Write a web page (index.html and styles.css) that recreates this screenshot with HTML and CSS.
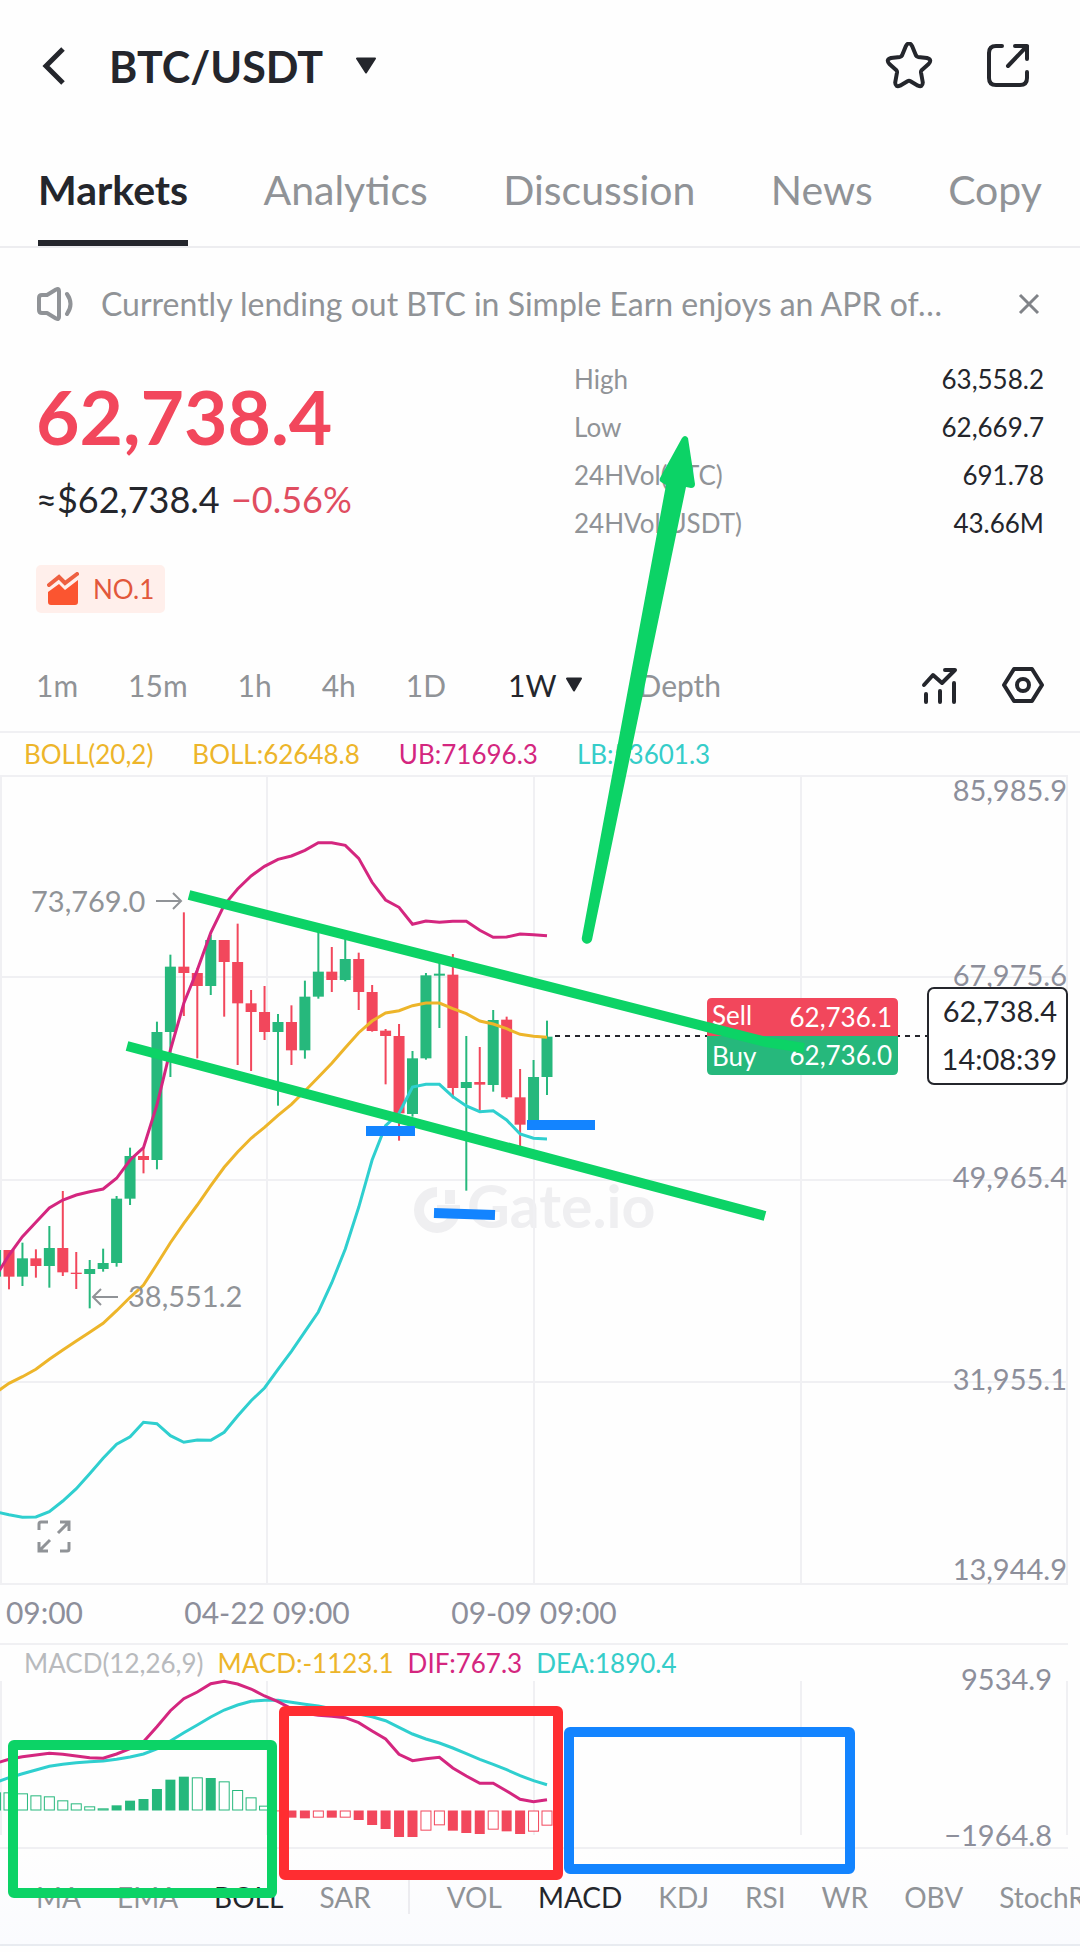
FILE: index.html
```
<!DOCTYPE html>
<html lang="en">

<head>
	<meta charset="UTF-8">
	<meta name="viewport" content="width=device-width, initial-scale=1">
	<title>BTC/USDT</title>
	<link rel="stylesheet" href="styles.css">
</head>

<body>
	<div class="page">

		<header class="topbar">
			<button class="icon-btn" aria-label="Back">
				<svg width="24" height="40" viewBox="0 0 24 40">
					<path d="M21 3L4 20L21 37" fill="none" stroke="#24262c" stroke-width="5" />
				</svg>
			</button>
			<button class="pair">
				BTC/USDT
				<svg width="22" height="18" viewBox="0 0 22 18">
					<path d="M2 1.500H20L11 15.500Z" fill="#24262c" stroke="#24262c" stroke-width="2" stroke-linejoin="round" />
				</svg>
			</button>
			<button class="icon-btn star" aria-label="Add to favorites">
				<svg width="48" height="48" viewBox="0 0 48 48">
					<path d="M20.800 4.200Q24 -1.500 27.200 4.200L31 13.500Q31.600 14.600 33 14.900L42 16Q47.500 17.600 43.600 22L36.600 28.200Q35.800 29.200 36 30.500L37.800 40.500Q37.600 45.500 33 43.700L25.500 39.200Q24 38.400 22.500 39.200L15 43.700Q10.400 45.500 10.200 40.500L12 30.500Q12.200 29.200 11.400 28.200L4.400 22Q0.500 17.600 6 16L15 14.900Q16.400 14.600 17 13.500Z" fill="none" stroke="#24262c" stroke-width="4" stroke-linejoin="round" />
				</svg>
			</button>
			<button class="icon-btn" aria-label="Share">
				<svg width="44" height="48" viewBox="0 0 44 48">
					<g fill="none" stroke="#24262c" stroke-width="4" stroke-linecap="round" stroke-linejoin="round">
						<path d="M16 4H10Q3 4 3 11V36Q3 43 10 43H34Q41 43 41 36V30" />
						<path d="M29 4H41V17M41 4L22 24" />
					</g>
				</svg>
			</button>
		</header>

		<nav class="tabs">
			<a href="#" class="active">Markets</a>
			<a href="#">Analytics</a>
			<a href="#">Discussion</a>
			<a href="#">News</a>
			<a href="#">Copy</a>
		</nav>

		<div class="notice">
			<svg width="38" height="36" viewBox="0 0 38 36">
				<g fill="none" stroke="#909397" stroke-width="4" stroke-linecap="round" stroke-linejoin="round">
					<path d="M6 9H11L20 3.500Q23 2 23 5V31Q23 34 20 32.500L11 27H6Q3 27 3 24V12Q3 9 6 9Z" />
					<path d="M31 8Q38 18 31 28" />
				</g>
			</svg>
			<span class="notice-text">Currently lending out BTC in Simple Earn enjoys an APR of…</span>
			<button class="icon-btn" aria-label="Close">
				<svg width="22" height="22" viewBox="0 0 22 22">
					<path d="M2 2L20 20M20 2L2 20" stroke="#808388" stroke-width="3" />
				</svg>
			</button>
		</div>

		<section class="summary">
			<div>
				<div class="price">62,738.4</div>
				<div class="sub">≈$62,738.4 <span class="down">−0.56%</span></div>
				<div class="rank">
					<svg width="32" height="34" viewBox="0 0 32 34">
						<path d="M1 20L12 12L18 18L31 8V30Q31 33 28 33H4Q1 33 1 30Z" fill="#fb5530" />
						<path d="M2 13L12 5L18 11L30 2" fill="none" stroke="#ee6041" stroke-width="4" stroke-linecap="round" />
					</svg>
					NO.1
				</div>
			</div>
			<dl class="stats">
				<div><dt>High</dt><dd>63,558.2</dd></div>
				<div><dt>Low</dt><dd>62,669.7</dd></div>
				<div><dt>24HVol(BTC)</dt><dd>691.78</dd></div>
				<div><dt>24HVol(USDT)</dt><dd>43.66M</dd></div>
			</dl>
		</section>

		<div class="frames">
			<button>1m</button>
			<button>15m</button>
			<button>1h</button>
			<button>4h</button>
			<button>1D</button>
			<button class="active">1W
				<svg width="18" height="16" viewBox="0 0 18 16">
					<path d="M2 1.500H16L9 13.500Z" fill="#24262c" stroke="#24262c" stroke-width="2" stroke-linejoin="round" />
				</svg>
			</button>
			<button>Depth</button>
			<button class="tools" aria-label="Indicators">
				<svg width="38" height="38" viewBox="0 0 38 38">
					<g fill="none" stroke="#24262c" stroke-width="4" stroke-linecap="round" stroke-linejoin="round">
						<path d="M4 19L13 9L22 17L35 4H25M6 28V36M20 25V36M34 17V36" />
					</g>
				</svg>
			</button>
			<button aria-label="Chart settings">
				<svg width="42" height="38" viewBox="0 0 42 38">
					<g fill="none" stroke="#24262c" stroke-width="4" stroke-linejoin="round">
						<path d="M12 3H30L40 19L30 35H12L2 19Z" />
						<circle cx="21" cy="19" r="6" />
					</g>
				</svg>
			</button>
		</div>

		<div class="legend">
			<span class="gold">BOLL(20,2)</span>
			<span class="gold">BOLL:62648.8</span>
			<span class="pink">UB:71696.3</span>
			<span class="teal">LB:53601.3</span>
		</div>

		<svg class="chart" viewBox="0 0 1080 870">
			<g class="watermark">
				<path d="M437 417A18 18 0 1 0 455 435H437" />
				<path d="M450 415V429" />
				<text x="467" y="453">Gate.io</text>
			</g>
			<path class="grid" d="M0 1H1068M0 202H1068M0 405H1068M0 607H1068M0 809H1068M0 869H1068M1 1V809M267 1V809M534 1V809M801 1V809M1067 1V809" />
			<g class="axis">
				<text x="1067" y="26" text-anchor="end">85,985.9</text>
				<text x="1067" y="211" text-anchor="end">67,975.6</text>
				<text x="1067" y="413" text-anchor="end">49,965.4</text>
				<text x="1067" y="615" text-anchor="end">31,955.1</text>
				<text x="1067" y="805" text-anchor="end">13,944.9</text>
			</g>
			<g class="axis time">
				<text x="83" y="849" text-anchor="end">09:00</text>
				<text x="267" y="849" text-anchor="middle">04-22 09:00</text>
				<text x="534" y="849" text-anchor="middle">09-09 09:00</text>
			</g>
			<path class="dash" d="M555 261H928" />
			<g id="candles"></g>
			<g id="bands"></g>

			<g class="mark">
				<text x="31" y="137">73,769.0</text>
				<path d="M156 126H181M173 118L181 126L173 134" />
				<text x="128" y="532">38,551.2</text>
				<path d="M118 522H93M101 514L93 522L101 530" />
			</g>

			<g class="quote">
				<path d="M707 261V228Q707 223 712 223H893Q898 223 898 228V261Z" fill="#f2475c" />
				<path d="M707 261V295Q707 300 712 300H893Q898 300 898 295V261Z" fill="#26b87c" />
				<text x="712" y="250">Sell</text>
				<text x="892" y="252" text-anchor="end">62,736.1</text>
				<text x="712" y="291">Buy</text>
				<text x="892" y="290" text-anchor="end">62,736.0</text>
			</g>

			<g class="last">
				<rect x="928" y="213" width="139" height="96" rx="6" />
				<text x="1057" y="247" text-anchor="end">62,738.4</text>
				<text x="1057" y="295" text-anchor="end">14:08:39</text>
			</g>

			<path class="expand" d="M39 755V749Q39 747 41 747H48M60 747H69V756M69 747L58 758M69 767V774Q69 776 67 776H60M48 776H39V767M39 776L50 765" />
		</svg>

		<div class="legend tight">
			<span class="muted">MACD(12,26,9)</span>
			<span class="gold">MACD:-1123.1</span>
			<span class="pink">DIF:767.3</span>
			<span class="teal">DEA:1890.4</span>
		</div>

		<svg class="chart" viewBox="0 0 1080 169">
			<path class="grid" d="M0 167H1068M1 0V154M267 0V154M534 0V154M801 0V154M1067 0V154" />
			<g class="axis">
				<text x="1052" y="9" text-anchor="end">9534.9</text>
				<text x="1052" y="165" text-anchor="end">−1964.8</text>
			</g>
			<g id="macd"></g>
		</svg>

		<nav class="indicators">
			<button>MA</button>
			<button>EMA</button>
			<button class="active">BOLL</button>
			<button>SAR</button>
			<i class="sep"></i>
			<button>VOL</button>
			<button class="active">MACD</button>
			<button>KDJ</button>
			<button>RSI</button>
			<button>WR</button>
			<button>OBV</button>
			<button>StochRSI</button>
		</nav>

		<!-- hand drawings on top of the charts -->
		<svg class="drawings" viewBox="0 0 1080 1952">
			<g fill="none" stroke-width="10">
				<path d="M189 895L766 1042L804 1048M127 1046L765 1216" stroke="#0cd366" />
				<path d="M366 1131H415M434 1213L495 1215M527 1125H595" stroke="#1384ff" />
				<rect x="13" y="1745" width="259" height="148" rx="1" stroke="#0cd366" stroke-linejoin="round" />
				<rect x="284" y="1711" width="274" height="164" rx="1" stroke="#ff2d31" stroke-linejoin="round" />
				<rect x="569" y="1732" width="281" height="137" rx="1" stroke="#1384ff" stroke-linejoin="round" />
			</g>
			<path d="M582 937L666 485L661 482Q659 481 660 478L682 438Q685 434 688 438L695 484Q695 488 691 488L686 487L592 940A5 5 0 0 1 582 937Z" fill="#0cd366" />
		</svg>
	</div>

	<script>

		///// Weekly candles: up, high, body top, body bottom, low
		var candles = [
			[1, 1290, 1290, 1370, 1415],
			[0, 1290, 1290, 1370, 1408], [1, 1268, 1315, 1370, 1398], [0, 1288, 1315, 1338, 1373],
			[1, 1218, 1284, 1338, 1403], [0, 1113, 1284, 1357, 1368], [0, 1296, 1358, 1362, 1407],
			[1, 1320, 1347, 1362, 1465], [1, 1286, 1329, 1347, 1355], [1, 1128, 1136, 1329, 1340],
			[1, 983, 1008, 1136, 1155], [0, 985, 1008, 1020, 1060], [1, 605, 636, 1020, 1048],
			[1, 404, 440, 636, 771], [0, 277, 440, 459, 588], [0, 445, 459, 498, 715],
			[1, 345, 360, 498, 525], [0, 360, 360, 426, 590], [0, 311, 426, 550, 735],
			[0, 510, 550, 576, 753], [0, 498, 576, 636, 660], [1, 582, 606, 636, 857],
			[0, 556, 606, 691, 735], [1, 482, 530, 691, 716], [1, 335, 455, 530, 536],
			[0, 381, 455, 480, 516], [1, 355, 417, 480, 484], [0, 398, 417, 516, 570],
			[0, 495, 516, 633, 635], [0, 627, 632, 648, 793], [0, 612, 648, 880, 962],
			[1, 693, 715, 882, 890], [1, 459, 466, 715, 719], [1, 425, 461, 467, 624],
			[0, 402, 464, 804, 835], [1, 648, 786, 804, 1112], [0, 681, 786, 794, 872],
			[1, 570, 600, 795, 815], [0, 590, 599, 832, 837], [0, 747, 832, 914, 978],
			[1, 720, 771, 905, 905], [1, 602, 650, 771, 825]
		];

		var upper = [1370, 1305, 1250, 1207, 1164, 1140, 1125, 1115, 1107, 1075, 1020, 983, 855, 690, 550, 450, 338, 255, 207, 168, 139, 118, 108, 91, 68, 68, 76, 115, 187, 240, 262, 313, 303, 307, 304, 304, 331, 352, 351, 342, 344, 347];
		var middle = [1718, 1690, 1670, 1648, 1618, 1590, 1563, 1537, 1510, 1472, 1432, 1395, 1333, 1268, 1210, 1155, 1097, 1042, 996, 955, 922, 886, 853, 813, 772, 730, 683, 638, 603, 579, 572, 557, 549, 549, 566, 581, 603, 612, 626, 643, 649, 652];
		var lower = [2075, 2084, 2092, 2091, 2075, 2043, 2006, 1961, 1915, 1873, 1850, 1807, 1811, 1847, 1867, 1860, 1861, 1837, 1788, 1742, 1704, 1648, 1594, 1535, 1476, 1388, 1287, 1162, 1020, 917, 880, 801, 793, 793, 830, 858, 875, 872, 900, 942, 955, 957];

		///// MACD: bar end, 1 = solid
		var bars = [[487, 0], [487, 0], [490, 0], [496, 0], [499, 0], [511, 0], [520, 0], [529, 0], [535, 0], [526, 1], [512, 1], [507, 1], [477, 1], [449, 1], [440, 1], [442, 0], [444, 1], [454, 0], [480, 0], [502, 0], [527, 0], [544, 1], [563, 1], [565, 1], [563, 0], [563, 1], [563, 0], [570, 1], [585, 1], [597, 1], [621, 1], [621, 1], [602, 0], [586, 0], [602, 1], [609, 1], [612, 1], [599, 0], [604, 1], [612, 1], [605, 0], [587, 0]];
		var dif = [400, 388, 380, 375, 370, 373, 378, 383, 385, 372, 356, 335, 290, 242, 206, 186, 161, 154, 162, 177, 198, 215, 236, 250, 256, 259, 263, 278, 303, 327, 373, 392, 386, 382, 414, 438, 460, 460, 483, 508, 515, 509];
		var dea = [457, 443, 431, 420, 409, 403, 398, 395, 393, 388, 381, 372, 357, 333, 308, 285, 261, 240, 225, 214, 211, 211, 217, 223, 228, 236, 245, 252, 260, 272, 292, 312, 327, 339, 354, 371, 388, 403, 419, 437, 452, 464];

		var GREEN = '#26b87c', RED = '#f2475c';

		function x(i) {
			return 9 + (i - 1) * 13.45;
		}

		function line(values, offset, color) {
			var points = values.map(function (v, i) {
				return x(i).toFixed(1) + ',' + (v / 3 + offset).toFixed(1);
			});
			return '<polyline fill="none" stroke-width="3" stroke="' + color + '" points="' + points.join(' ') + '"/>';
		}

		function rect(cx, w, top, bottom, attrs) {
			return '<rect x="' + (cx - w / 2) + '" y="' + top + '" width="' + w + '" height="' + (bottom - top) + '" ' + attrs + '/>';
		}

		document.getElementById('candles').innerHTML = candles.map(function (c, i) {
			var fill = 'fill="' + (c[0] ? GREEN : RED) + '"';
			return rect(x(i), 2, 45 + c[1] / 3, 45 + c[4] / 3, fill) + rect(x(i), 11, 45 + c[2] / 3, 45 + c[3] / 3, fill);
		}).join('');

		document.getElementById('bands').innerHTML =
			line(upper, 45, '#d4267f') + line(middle, 45, '#edb52a') + line(lower, 45, '#2fcfcf');

		document.getElementById('macd').innerHTML = bars.map(function (b, i) {
			var end = b[0] / 3 - 51, zero = 129.5;
			var color = end < zero ? GREEN : RED;
			var top = Math.min(end, zero), bottom = Math.max(end, zero);
			if (b[1]) return rect(x(i), 10, top, bottom, 'fill="' + color + '"');
			return rect(x(i), 10, top + 0.5, bottom - 0.5, 'fill="#fff" stroke="' + color + '"');
		}).join('') + line(dea, -51, '#2fcfcf') + line(dif, -51, '#d4267f');

	</script>
</body>

</html>
```
FILE: styles.css
```
html,
body {
	margin: 0;
	padding: 0;
	background: #fefefe;
	color: #24262c;
}

body {
	font-family: Lato, "Noto Sans", sans-serif;
}

button {
	margin: 0;
	padding: 0;
	border: 0;
	background: none;
	font: inherit;
	color: inherit;
}

svg {
	display: block;
	flex: none;
}

.page {
	position: relative;
	overflow: hidden;
	padding-bottom: 4px;
}

.topbar {
	display: flex;
	align-items: center;
	padding: 38px 50px 0 42px;
	height: 56px;
}

.pair {
	display: flex;
	align-items: center;
	gap: 32px;
	margin-left: 43px;
	font-size: 43px;
	font-weight: 700;
}

.star {
	margin-left: auto;
	margin-right: 53px;
}

.tabs {
	display: flex;
	justify-content: space-between;
	padding: 72px 38px 0;
	border-bottom: 2px solid #ededf0;
	font-size: 41px;
	line-height: 48px;
}

.tabs a {
	padding-bottom: 26px;
	border-bottom: 6px solid transparent;
	color: #909397;
	text-decoration: none;
}

.tabs .active {
	border-color: #24262c;
	color: #24262c;
	font-weight: 700;
}

.notice {
	display: flex;
	align-items: center;
	padding: 36px 40px 31px 36px;
	color: #909397;
	font-size: 32px;
	line-height: 40px;
}

.notice-text {
	flex: 1;
	margin-left: 27px;
	white-space: nowrap;
}

.summary {
	display: flex;
	justify-content: space-between;
	padding: 0 36px;
}

.price {
	margin-top: 17px;
	color: #f2475c;
	font-size: 75px;
	font-weight: 700;
	line-height: 88px;
}

.sub {
	margin-top: 15px;
	font-size: 36px;
	line-height: 48px;
}

.down {
	margin-left: 2px;
	color: #e04d60;
}

.rank {
	display: flex;
	align-items: center;
	gap: 14px;
	box-sizing: border-box;
	width: fit-content;
	height: 48px;
	margin-top: 42px;
	padding: 0 11px;
	border-radius: 5px;
	background: #ffefeb;
	color: #e2583b;
	font-size: 26px;
}

.stats {
	width: 470px;
	margin: 0;
	font-size: 26px;
	line-height: 48px;
}

.stats div {
	display: flex;
	justify-content: space-between;
}

.stats dt {
	color: #909397;
}

.stats dd {
	margin: 0;
}

.frames {
	display: flex;
	align-items: center;
	gap: 50px;
	margin-top: 52px;
	padding: 0 36px 26px;
	border-bottom: 2px solid #f0f0f3;
	color: #909397;
	font-size: 30px;
	line-height: 40px;
}

.frames .active {
	display: flex;
	align-items: center;
	gap: 8px;
	margin: 0 6px 0 12px;
	color: #24262c;
}

.frames .tools {
	margin-left: auto;
	margin-right: -6px;
}

.legend {
	display: flex;
	gap: 39px;
	padding-left: 24px;
	font-size: 26px;
	line-height: 42px;
}

.tight {
	gap: 14px;
	line-height: 36px;
}

.gold {
	color: #edb52a;
}

.pink {
	color: #d4267f;
}

.teal {
	color: #35cdc9;
}

.muted {
	color: #b8babd;
}

.chart {
	width: 100%;
	height: auto;
	overflow: visible;
}

.grid {
	fill: none;
	stroke: #f0f0f3;
	stroke-width: 2;
}

.axis {
	fill: #8d8f9b;
	font-size: 29px;
}

.time {
	font-size: 30px;
}

.mark text {
	fill: #909397;
	font-size: 29px;
}

.mark path {
	fill: none;
	stroke: #909397;
	stroke-width: 2;
}

.dash {
	stroke: #24262c;
	stroke-width: 2;
	stroke-dasharray: 5 5;
}

.quote text {
	fill: #fff;
	font-size: 26px;
}

.last rect {
	fill: #fff;
	stroke: #24262c;
	stroke-width: 2;
}

.last text {
	fill: #24262c;
	font-size: 29px;
}

.watermark text {
	fill: #efeff1;
	font-size: 59px;
	font-weight: 700;
}

.watermark path {
	fill: none;
	stroke: #efeff1;
	stroke-width: 10;
}

.expand {
	fill: none;
	stroke: #909397;
	stroke-width: 3;
}

.indicators {
	display: flex;
	align-items: center;
	gap: 36px;
	padding: 27px 0 27px 36px;
	border-bottom: 2px solid #e8ebf0;
	background: linear-gradient(#fefefe, #fafbfe);
	color: #909397;
	font-size: 28px;
	line-height: 40px;
	white-space: nowrap;
}

.indicators .active {
	color: #24262c;
}

.sep {
	flex: none;
	width: 2px;
	height: 34px;
	margin: 0 1px;
	background: #ececf0;
}

.drawings {
	position: absolute;
	top: 0;
	left: 0;
	width: 100%;
	pointer-events: none;
}
```
